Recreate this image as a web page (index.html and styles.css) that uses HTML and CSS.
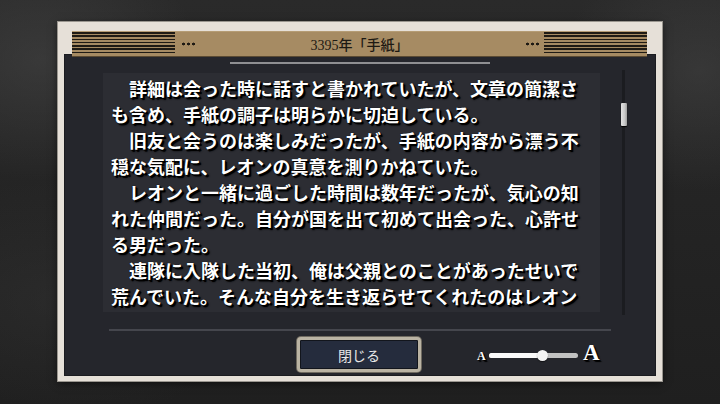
FILE: index.html
```html
<!DOCTYPE html>
<html lang="ja">
<head>
<meta charset="utf-8">
<title>3395年「手紙」</title>
<link rel="stylesheet" href="styles.css">
</head>
<body>
<div class="frame">
  <div class="header">
    <div class="stripes"></div>
    <div class="dots"></div>
    <div class="title">3395年「手紙」</div>
    <div class="dots"></div>
    <div class="stripes"></div>
  </div>
  <div class="panel">
    <div class="topline"></div>
    <div class="reader">
      <div class="textbox">
        <p>詳細は会った時に話すと書かれていたが、文章の簡潔さも含め、手紙の調子は明らかに切迫している。</p>
        <p>旧友と会うのは楽しみだったが、手紙の内容から漂う不穏な気配に、レオンの真意を測りかねていた。</p>
        <p>レオンと一緒に過ごした時間は数年だったが、気心の知れた仲間だった。自分が国を出て初めて出会った、心許せる男だった。</p>
        <p>連隊に入隊した当初、俺は父親とのことがあったせいで荒んでいた。そんな自分を生き返らせてくれたのはレオンだった。あいつがいなければ、今の俺はない。</p>
      </div>
      <div class="scroll"><div class="thumb"></div></div>
    </div>
    <div class="sep"></div>
    <div class="controls">
      <button class="close">閉じる</button>
      <div class="size">
        <span class="a-small">A</span>
        <div class="track"><div class="fill" style="width:53px"></div><div class="knob" style="left:53px"></div></div>
        <span class="a-big">A</span>
      </div>
    </div>
  </div>
</div>
</body>
</html>
```
FILE: styles.css
```css
* { box-sizing: border-box; }
html, body { margin: 0; padding: 0; }
body {
  width: 720px;
  height: 404px;
  overflow: hidden;
  background:
    radial-gradient(ellipse 160px 120px at 40px 60px, rgba(70,70,70,0.55), transparent),
    radial-gradient(ellipse 140px 120px at 700px 70px, rgba(70,70,70,0.5), transparent),
    radial-gradient(ellipse 200px 120px at 60px 300px, rgba(55,55,55,0.4), transparent),
    linear-gradient(180deg, #2a2a2a 0%, #242424 50%, #1f1f1f 100%);
  font-family: "Noto Sans CJK JP", sans-serif;
  padding-top: 22px;
}
.frame {
  width: 604px;
  height: 359px;
  margin: 0 auto;
  background: #e6e0d8;
  padding: 9px 6px 5px 6px;
  box-shadow: 0 0 0 1px #9a968f, 0 2px 8px rgba(0,0,0,0.6);
}
.header {
  position: relative;
  z-index: 1;
  height: 25px;
  margin: 0 9px 0 8px;
  background: #a68b63;
  box-shadow: 0 1px 0 #5a4a33, inset 0 1px 0 #b59c74;
  display: flex;
  align-items: center;
}
.stripes {
  align-self: flex-start;
  margin-top: 1px;
  width: 103px;
  height: 22px;
  background: repeating-linear-gradient(180deg, #1f1b15 0, #1f1b15 1.6px, #a68b63 1.6px, #a68b63 3.3px);
}
.dots {
  width: 14px;
  height: 4px;
  margin: 0 5px 0 6px;
  background: radial-gradient(circle, #1e1a14 1.2px, transparent 1.7px) 0 0 / 5px 4px repeat-x;
}
.title {
  flex: 1;
  text-align: center;
  font-family: "Liberation Serif", "Noto Sans CJK JP", serif;
  font-size: 14px;
  font-weight: 500;
  color: #1d1913;
}
.panel {
  position: relative;
  margin-top: -2px;
  height: 322px;
  background: #25262c;
  padding-top: 8px;
  box-shadow: inset 0 0 0 1px #1b1c20;
}
.topline {
  width: 260px;
  height: 2px;
  margin: 0 auto;
  background: #8f8f92;
}
.reader {
  display: flex;
  margin-top: 9px;
  height: 239px;
  padding-left: 39px;
}
.textbox {
  width: 497px;
  height: 239px;
  overflow: hidden;
  background: #2c2d33;
  padding: 2px 0 0 8px;
}
.textbox p {
  margin: 0;
  width: 469px;
  text-indent: 1em;
  font-size: 18px;
  line-height: 26px;
  font-weight: 700;
  color: #ffffff;
  text-shadow: 1px 1px 0 #000, 2px 2px 0 #000, 2px 2px 2px #000, 0 0 1px #000;
}
.scroll {
  width: 6px;
  height: 245px;
  margin: -3px 0 0 21px;
  background: linear-gradient(90deg, transparent 1px, #1b1c20 1px, #1b1c20 4px, transparent 4px);
  padding-top: 33px;
}
.thumb {
  width: 6px;
  height: 23px;
  border-radius: 1px;
  background: linear-gradient(90deg, #e2e2e2, #c9c9c9 60%, #9d9d9d);
  box-shadow: 0 1px 1px #000;
}
.sep {
  width: 502px;
  height: 2px;
  margin: 17px 0 0 45px;
  background: #45464d;
}
.controls {
  display: flex;
  align-items: center;
  margin-top: 6px;
  padding-left: 233px;
  height: 35px;
}
.close {
  width: 124px;
  height: 35px;
  border: 3px solid #bab3a3;
  border-radius: 4px;
  background: #252c3d;
  box-shadow: inset 0 0 0 1px #12151c, 0 0 0 1px #6f6a60;
  color: #e8e8e8;
  font-family: "Noto Sans CJK JP", sans-serif;
  font-size: 14px;
  padding: 0;
}
.size {
  display: flex;
  align-items: center;
  margin-left: 56px;
  height: 35px;
}
.a-small, .a-big {
  font-family: "Liberation Serif", serif;
  font-weight: 700;
  color: #fff;
  text-shadow: 1px 1px 0 #000, 2px 2px 1px #000;
}
.a-small {
  font-size: 12px;
  width: 9px;
  margin-top: 3px;
}
.a-big {
  font-size: 23px;
  margin-left: 5px;
  margin-top: -3px;
}
.track {
  position: relative;
  width: 89px;
  height: 5px;
  margin-left: 3px;
  margin-top: 2px;
  border-radius: 3px;
  background: #c2c2c2;
}
.fill {
  height: 5px;
  border-radius: 3px;
  background: #fafafa;
}
.knob {
  position: absolute;
  top: -3px;
  width: 11px;
  height: 11px;
  margin-left: -5px;
  border-radius: 50%;
  background: #f4f4f4;
  box-shadow: 0 1px 1px rgba(0,0,0,0.5);
}
```
